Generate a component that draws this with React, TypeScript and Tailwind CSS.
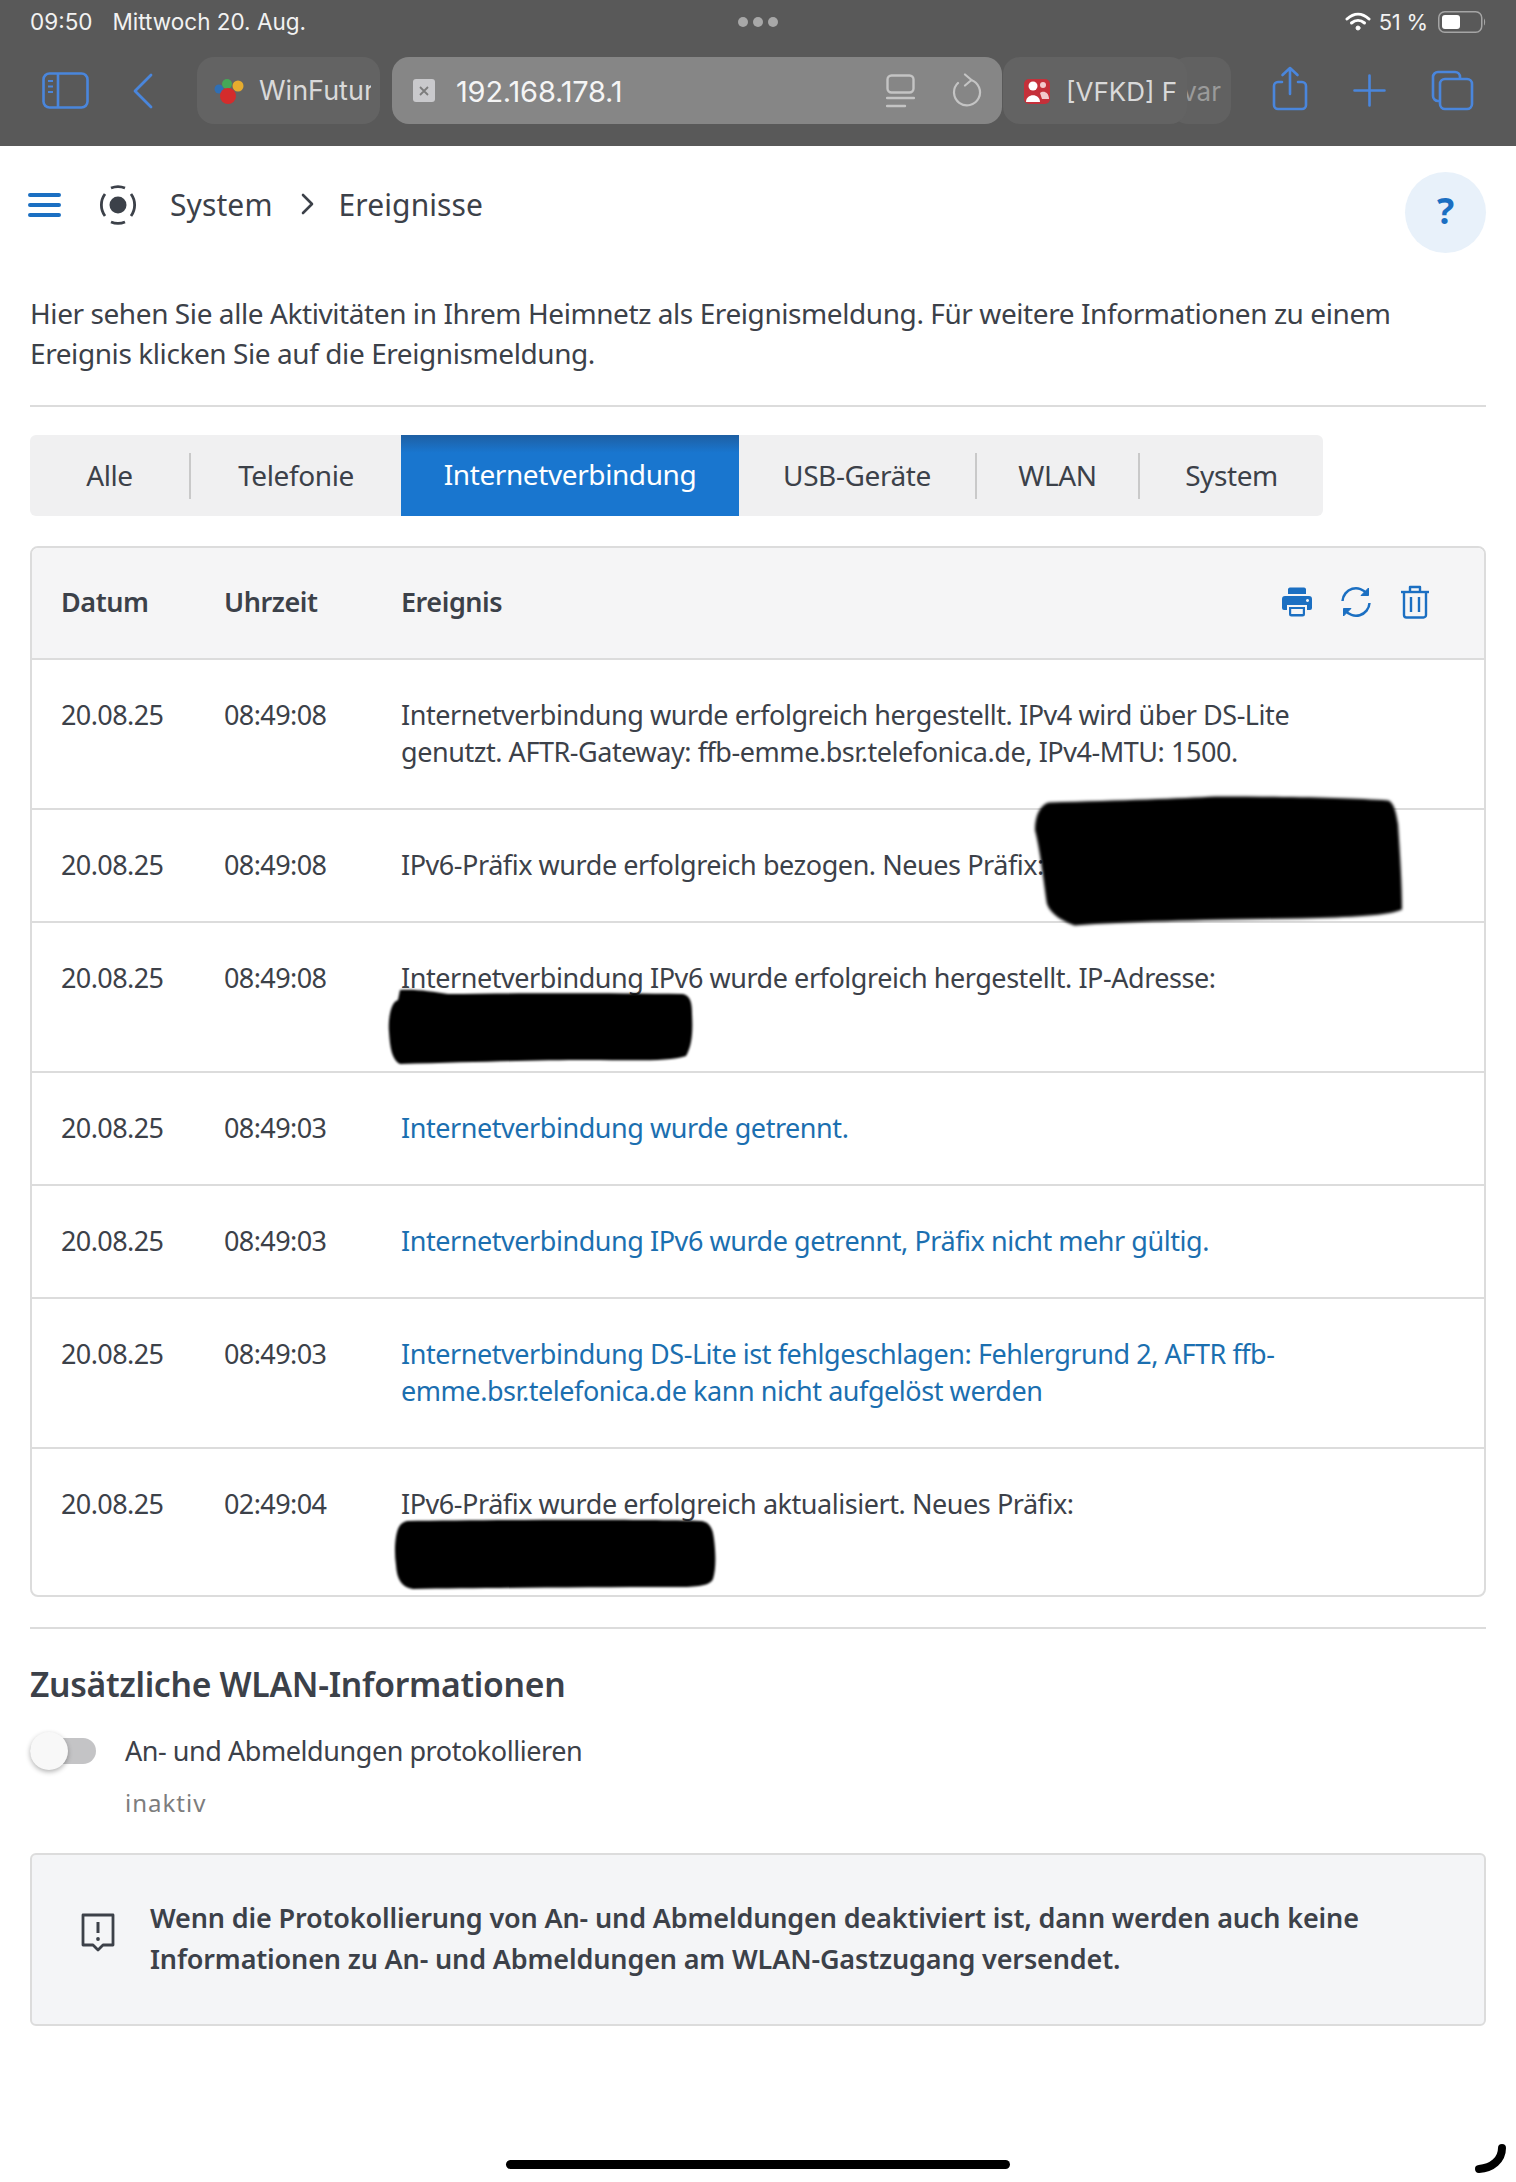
import React from "react";

const dates = [
  { t: "08:49:08", lines: ["Internetverbindung wurde erfolgreich hergestellt. IPv4 wird über DS-Lite", "genutzt. AFTR-Gateway: ffb-emme.bsr.telefonica.de, IPv4-MTU: 1500."], link: false, blob: 0 },
  { t: "08:49:08", lines: ["IPv6-Präfix wurde erfolgreich bezogen. Neues Präfix:"], link: false, blob: 1 },
  { t: "08:49:08", lines: ["Internetverbindung IPv6 wurde erfolgreich hergestellt. IP-Adresse:", "\u00a0"], link: false, blob: 2 },
  { t: "08:49:03", lines: ["Internetverbindung wurde getrennt."], link: true, blob: 0 },
  { t: "08:49:03", lines: ["Internetverbindung IPv6 wurde getrennt, Präfix nicht mehr gültig."], link: true, blob: 0 },
  { t: "08:49:03", lines: ["Internetverbindung DS-Lite ist fehlgeschlagen: Fehlergrund 2, AFTR ffb-", "emme.bsr.telefonica.de kann nicht aufgelöst werden"], link: true, blob: 0 },
  { t: "02:49:04", lines: ["IPv6-Präfix wurde erfolgreich aktualisiert. Neues Präfix:", "\u00a0"], link: false, blob: 3 },
];

function Blob({ which }: { which: number }) {
  if (which === 1)
    return (
      <svg className="absolute left-[632px] top-[-52px] blur-[1.5px]" width="371" height="134" viewBox="0 0 374 134">
        <path d="M16 8 C90 6 150 4 184 2 C250 2 320 3 358 6 C364 8 366 18 368 30 C370 60 372 90 372 116 C360 122 320 124 270 125 C180 126 100 128 42 132 C32 128 18 122 14 110 C10 80 6 50 2 36 C2 20 8 10 16 8 Z" fill="#000" />
      </svg>
    );
  if (which === 2)
    return (
      <svg className="absolute left-[-13px] top-[29px] blur-[1px]" width="306" height="78" viewBox="0 0 306 78">
        <path d="M12 2 C30 1 44 4 60 6 C130 5 220 5 295 6 C303 8 304 16 304 26 C305 44 304 58 298 68 C280 74 240 72 200 72 C150 72 90 74 12 76 C4 72 2 60 1 44 C0 34 2 14 10 12 Z" fill="#000" />
      </svg>
    );
  if (which === 3)
    return (
      <svg className="absolute left-[-8px] top-[34px] blur-[1px]" width="324" height="72" viewBox="0 0 324 72">
        <path d="M14 2 C90 1 240 0 308 2 C317 3 320 10 321 20 C323 36 323 50 320 60 C316 68 300 68 280 68 C190 68 90 69 20 70 C8 68 4 60 3 46 C1 32 2 18 5 10 C7 5 10 3 14 2 Z" fill="#000" />
      </svg>
    );
  return null;
}

export default function App() {
  return (
    <div className="w-[1516px] h-[2182px] bg-white relative overflow-hidden font-['Noto_Sans',sans-serif] text-[#3c4149] tracking-[-0.3px]">
      {/* browser chrome */}
      <div className="h-[146px] bg-[#595959] text-white font-['Inter',sans-serif] tracking-normal">
        <div className="h-[44px] px-[30px] flex items-center justify-between text-[22.5px] relative">
          <div className="flex gap-[20px] text-[#f2f2f2]">
            <span>09:50</span>
            <span>Mittwoch 20. Aug.</span>
          </div>
          <div className="absolute left-[738px] top-[17px] flex gap-[5px]">
            <span className="w-[10px] h-[10px] rounded-full bg-[#a8a8a8]" />
            <span className="w-[10px] h-[10px] rounded-full bg-[#a8a8a8]" />
            <span className="w-[10px] h-[10px] rounded-full bg-[#a8a8a8]" />
          </div>
          <div className="flex items-center gap-[8px]">
            <svg width="26" height="20" viewBox="0 0 26 20" fill="none" stroke="#fff" strokeWidth="3" strokeLinecap="round">
              <path d="M2 7 C9 0.5 17 0.5 24 7" />
              <path d="M6.5 11 C10.5 7.5 15.5 7.5 19.5 11" />
              <circle cx="13" cy="16" r="2" fill="#fff" strokeWidth="1" />
            </svg>
            <span className="text-[#f2f2f2] text-[22px] tracking-[-0.2px]">51 %</span>
            <svg width="48" height="22" viewBox="0 0 48 22" className="ml-[2px]">
              <rect x="0.75" y="0.75" width="43" height="20.5" rx="6" fill="none" stroke="#a5a5a5" strokeWidth="1.5" />
              <rect x="4" y="4" width="18" height="14" rx="3" fill="#fff" />
              <path d="M46 7.5 C47.5 8.5 47.5 13.5 46 14.5 Z" fill="#a5a5a5" />
            </svg>
          </div>
        </div>
        <div className="h-[67px] mt-[13px] flex items-center pl-[42px]">
          <svg width="47" height="37" viewBox="0 0 47 37" fill="none" stroke="#4a86dc" strokeWidth="2.6">
            <rect x="1.5" y="1.5" width="44" height="34" rx="6" />
            <path d="M16 1.5 V35.5" />
            <path d="M6 9 H11 M6 14.5 H11 M6 20 H11" strokeWidth="2" />
          </svg>
          <svg className="ml-[43px]" width="22" height="36" viewBox="0 0 22 36" fill="none" stroke="#4a86dc" strokeWidth="2.8" strokeLinecap="round" strokeLinejoin="round">
            <path d="M19 2 L3 18 L19 34" />
          </svg>
          <div className="ml-[43px] w-[183px] h-[67px] rounded-[17px] bg-[#636363] flex items-center pl-[17px] overflow-hidden">
            <svg width="30" height="28" viewBox="0 0 30 28" className="shrink-0">
              <circle cx="5" cy="12" r="4.5" fill="#2f6fb5" />
              <circle cx="13" cy="7" r="5" fill="#46a857" />
              <circle cx="24" cy="9" r="5.5" fill="#e6ac2e" />
              <circle cx="14" cy="19" r="8" fill="#d42c2c" />
            </svg>
            <span className="ml-[15px] mt-[2px] text-[27px] text-[#d9d9d9] whitespace-nowrap w-[112px] overflow-hidden">WinFuture</span>
          </div>
          <div className="ml-[12px] w-[610px] h-[67px] rounded-[17px] bg-[#868686] flex items-center pl-[21px] pr-[20px]">
            <div className="w-[22px] h-[23px] rounded-[3px] bg-[#c9c9cc] flex items-center justify-center">
              <svg width="12" height="12" viewBox="0 0 12 12" stroke="#7c7c7c" strokeWidth="1.8"><path d="M2 2 L10 10 M10 2 L2 10" /></svg>
            </div>
            <span className="ml-[21px] mt-[3px] text-[29px] text-[#f5f5f5] tracking-[-0.2px]">192.168.178.1</span>
            <div className="ml-auto flex items-center gap-[37px]">
              <svg width="29" height="34" viewBox="0 0 29 34" fill="none" stroke="#c4c4c4" strokeWidth="2.4" strokeLinecap="round">
                <rect x="1.5" y="1.5" width="26" height="17" rx="4" />
                <path d="M1 24 H28 M1 32 H19" />
              </svg>
              <svg width="30" height="35" viewBox="0 0 30 35" fill="none" stroke="#c4c4c4" strokeWidth="2.2" strokeLinecap="round" strokeLinejoin="round">
                <path d="M19 7 A13 13 0 1 1 6 10" />
                <path d="M13 1.5 L19.5 7 L13 12.5" />
              </svg>
            </div>
          </div>
          <div className="relative w-[228px] h-[67px] ml-[1px]">
            <div className="absolute right-0 top-0 w-[60px] h-[67px] rounded-[17px] bg-[#616161] flex items-center justify-end pr-[10px] overflow-hidden">
              <span className="text-[26px] mt-[2px] text-[#9a9a9a] whitespace-nowrap">var</span>
            </div>
            <div className="absolute left-0 top-0 w-[184px] h-[67px] rounded-[17px] bg-[#636363] flex items-center pl-[20px] overflow-hidden">
              <svg width="28" height="28" viewBox="0 0 28 28" className="shrink-0">
                <rect x="1" y="2" width="26" height="25" rx="5" fill="#c5303a" />
                <circle cx="10" cy="9" r="4.5" fill="#fff" />
                <path d="M3 25 C3 16 17 16 17 25 Z" fill="#fff" />
                <circle cx="20" cy="8" r="3" fill="#f3c9cc" />
                <path d="M17 16 C20 13 26 15 26 22 L19 22 Z" fill="#f3c9cc" />
              </svg>
              <span className="ml-[15px] mt-[2px] text-[26px] text-[#d9d9d9] whitespace-nowrap">[VFKD] F</span>
            </div>
          </div>
          <svg className="ml-[41px] mt-[-4px]" width="36" height="45" viewBox="0 0 36 45" fill="none" stroke="#4a86dc" strokeWidth="2.6" strokeLinecap="round" strokeLinejoin="round">
            <path d="M10 16 H6 A4 4 0 0 0 2 20 V39 A4 4 0 0 0 6 43 H30 A4 4 0 0 0 34 39 V20 A4 4 0 0 0 30 16 H26" />
            <path d="M18 28 V2 M10.5 9 L18 2 L25.5 9" />
          </svg>
          <svg className="ml-[45px]" width="33" height="33" viewBox="0 0 33 33" fill="none" stroke="#4a86dc" strokeWidth="2.6" strokeLinecap="round">
            <path d="M16.5 1.5 V31.5 M1.5 16.5 H31.5" />
          </svg>
          <svg className="ml-[45px]" width="43" height="41" viewBox="0 0 43 41" fill="none" stroke="#4a86dc" strokeWidth="2.6" strokeLinejoin="round">
            <path d="M9 31 H7 A5 5 0 0 1 2 26 V7 A5 5 0 0 1 7 2 H24 A5 5 0 0 1 29 7 V9" />
            <rect x="9" y="9" width="32" height="30" rx="5" />
          </svg>
        </div>
      </div>

      {/* page */}
      <div className="px-[30px]">
        <div className="h-[109px] flex items-start relative">
          <div className="flex items-center h-[30px] mt-[44px] -ml-[2px]">
            <svg width="33" height="24" viewBox="0 0 33 24" stroke="#1b6fc2" strokeWidth="4" strokeLinecap="round">
              <path d="M2 2 H31 M2 12 H31 M2 22 H31" />
            </svg>
          </div>
          <svg className="ml-[37px] mt-[39px]" width="40" height="40" viewBox="0 0 40 40" fill="none" stroke="#3c4149" strokeWidth="2.8">
            <path d="M13 3 A18.5 18.5 0 0 1 27 3 M33 9 A18.5 18.5 0 0 1 33 31 M27 37 A18.5 18.5 0 0 1 13 37 M7 31 A18.5 18.5 0 0 1 7 9" />
            <circle cx="20" cy="20" r="8.5" fill="#3c4149" stroke="none" />
          </svg>
          <div className="ml-[32px] mt-[38px] flex items-center h-[40px] text-[30px] tracking-[0.1px]">
            <span>System</span>
            <svg className="ml-[28px]" width="13" height="22" viewBox="0 0 13 22" fill="none" stroke="#3c4149" strokeWidth="2.6" strokeLinecap="round" strokeLinejoin="round"><path d="M2 2 L11 11 L2 20" /></svg>
            <span className="ml-[25px]">Ereignisse</span>
          </div>
          <div className="absolute right-0 top-[26px] w-[81px] h-[81px] rounded-full bg-[#e8f1fa] flex items-center justify-center text-[#1b6fc2] text-[36px] font-bold pb-[4px]">?</div>
        </div>

        <p className="mt-[38px] text-[28px] leading-[40px] tracking-[-0.42px]">
          Hier sehen Sie alle Aktivitäten in Ihrem Heimnetz als Ereignismeldung. Für weitere Informationen zu einem
          <br />
          Ereignis klicken Sie auf die Ereignismeldung.
        </p>
        <div className="mt-[32px] h-[2px] bg-[#dcdcdc]" />

        <div className="mt-[28px] w-[1293px] h-[81px] rounded-[6px] bg-[#f0f0f1] flex items-center text-[28px] tracking-[-0.4px] overflow-hidden">
          <div className="w-[161px] text-center border-r-2 border-[#c9c9c9] h-[46px] leading-[44px]">Alle</div>
          <div className="w-[210px] text-center h-[46px] leading-[44px]">Telefonie</div>
          <div className="w-[338px] h-[81px] leading-[79px] text-center text-white bg-[linear-gradient(#1e5fa3,#1976cf_22%,#1976cf)]">Internetverbindung</div>
          <div className="w-[238px] text-center border-r-2 border-[#c9c9c9] h-[46px] leading-[44px]">USB-Geräte</div>
          <div className="w-[163px] text-center border-r-2 border-[#c9c9c9] h-[46px] leading-[44px]">WLAN</div>
          <div className="w-[183px] text-center h-[46px] leading-[44px]">System</div>
        </div>

        <div className="mt-[30px] border-2 border-[#dcdcdc] rounded-[8px] text-[27px] tracking-[-0.45px]">
          <div className="h-[112px] pb-[2px] bg-[#f5f5f6] rounded-t-[6px] border-b-2 border-[#dcdcdc] flex items-center font-semibold pl-[29px]">
            <span className="w-[163px]">Datum</span>
            <span className="w-[177px]">Uhrzeit</span>
            <span>Ereignis</span>
            <div className="ml-auto mr-[54px] flex items-center gap-[29px]">
              <svg width="30" height="30" viewBox="0 0 30 30" fill="#1b6fc2">
                <path d="M6 2 A2 2 0 0 1 8 0.5 H22 A2 2 0 0 1 24 2 V7 H6 Z" />
                <path fillRule="evenodd" d="M3 9 H27 A3 3 0 0 1 30 12 V21 A2 2 0 0 1 28 23 H25 V18 H5 V23 H2 A2 2 0 0 1 0 21 V12 A3 3 0 0 1 3 9 Z M25.5 12 a1.5 1.5 0 1 0 0.01 0 Z" />
                <path d="M7 20 H23 V27 A2.5 2.5 0 0 1 20.5 29.5 H9.5 A2.5 2.5 0 0 1 7 27 Z M9.2 22 V27 H20.8 V22 Z" fillRule="evenodd" />
              </svg>
              <svg width="30" height="30" viewBox="0 0 30 30" fill="none" stroke="#1b6fc2" strokeWidth="2.5" strokeLinejoin="round">
                <path d="M1.5 14 A13.5 13.5 0 0 1 26 7" />
                <path d="M28.5 16 A13.5 13.5 0 0 1 4 23" />
                <path d="M27.5 1 V8.5 H20 Z" fill="#1b6fc2" strokeWidth="1" />
                <path d="M2.5 29 V21.5 H10 Z" fill="#1b6fc2" strokeWidth="1" />
              </svg>
              <svg width="30" height="34" viewBox="0 0 30 34" fill="none" stroke="#1b6fc2" strokeWidth="2.4" strokeLinejoin="round">
                <path d="M1 7 H29" />
                <path d="M10 7 V2 H20 V7" />
                <path d="M4 7 V30 A2.5 2.5 0 0 0 6.5 32.5 H23.5 A2.5 2.5 0 0 0 26 30 V7" />
                <path d="M11 12 V27 M19 12 V27" />
              </svg>
            </div>
          </div>
          {dates.map((r, i) => (
            <div key={i} className={`flex pl-[29px] pt-[36px] leading-[37px] ${i < dates.length - 1 ? "pb-[38px] border-b-2 border-[#dcdcdc]" : "pb-[36px]"}`}>
              <span className="w-[163px] shrink-0 tracking-[-0.6px]">20.08.25</span>
              <span className="w-[177px] shrink-0 tracking-[-0.6px]">{r.t}</span>
              <div className={`relative ${r.link ? "text-[#1b6fb0]" : ""}`}>
                {r.lines.map((l, j) => (
                  <div key={j} className="whitespace-nowrap">{l}</div>
                ))}
                <Blob which={r.blob} />
              </div>
            </div>
          ))}
        </div>

        <div className="mt-[30px] h-[2px] bg-[#dcdcdc]" />
        <h2 className="mt-[32px] text-[33.7px] leading-[46px] font-semibold">Zusätzliche WLAN-Informationen</h2>

        <div className="mt-[24px] flex items-center h-[40px]">
          <div className="relative w-[66px] h-[26px] rounded-r-[13px] rounded-l-[13px] bg-[#c4c4c6]">
            <div className="absolute left-0 top-[-6px] w-[38px] h-[38px] rounded-full bg-[#f8f8f8] shadow-[0_2px_5px_rgba(0,0,0,0.3)]" />
          </div>
          <span className="ml-[29px] text-[27px] tracking-[-0.45px]">An- und Abmeldungen protokollieren</span>
        </div>
        <div className="mt-[15px] ml-[95px] text-[24px] leading-[34px] text-[#7d7d7d] tracking-[1px]">inaktiv</div>

        <div className="mt-[33px] h-[173px] rounded-[6px] border-2 border-[#dcdcdc] bg-[#f4f5f7] flex items-center pl-[49px]">
          <svg className="mt-[-14px] shrink-0" width="34" height="39" viewBox="0 0 34 39" fill="none" stroke="#3c4149" strokeWidth="2.8" strokeLinejoin="round">
            <path d="M2 2 H32 V32 H22 L17 37 L12 32 H2 Z" />
            <path d="M17 9 V20" strokeWidth="3" />
            <circle cx="17" cy="26" r="1.9" fill="#3c4149" stroke="none" />
          </svg>
          <p className="ml-[35px] mb-[3px] text-[27px] leading-[41px] font-semibold tracking-[-0.15px]">
            Wenn die Protokollierung von An- und Abmeldungen deaktiviert ist, dann werden auch keine
            <br />
            Informationen zu An- und Abmeldungen am WLAN-Gastzugang versendet.
          </p>
        </div>
      </div>

      <div className="absolute left-[506px] top-[2160px] w-[504px] h-[9px] rounded-full bg-black" />
      <svg className="absolute left-[1474px] top-[2142px]" width="34" height="32" viewBox="0 0 34 32" fill="none" stroke="#000" strokeWidth="8" strokeLinecap="round">
        <path d="M28 6 C28 18 18 26 5 27" />
      </svg>
    </div>
  );
}
